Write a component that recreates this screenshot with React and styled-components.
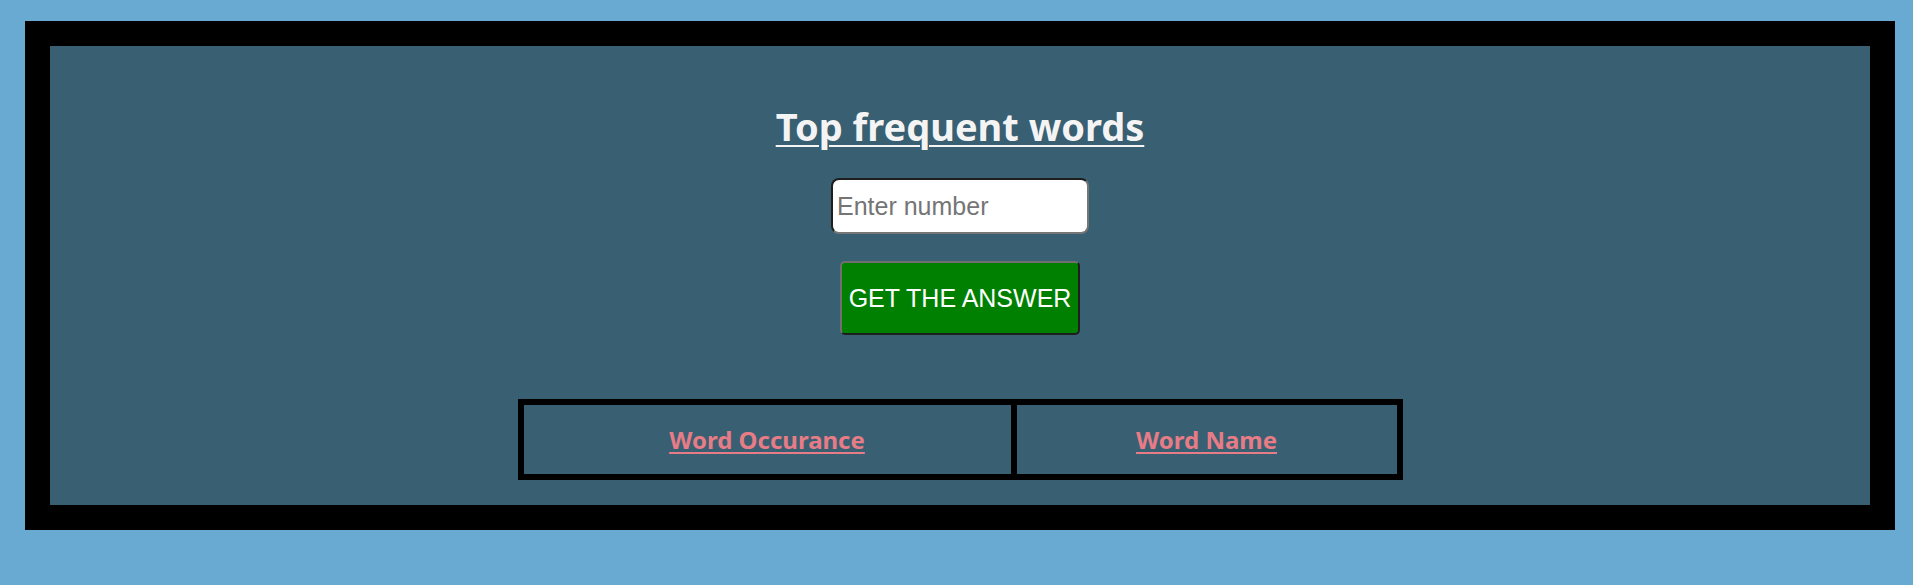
import React from "react";
import styled, { createGlobalStyle } from "styled-components";

const GlobalStyle = createGlobalStyle`
  html, body {
    margin: 0;
    padding: 0;
    background: #68aad1;
  }
  * { box-sizing: border-box; }
`;

const Page = styled.div`
  padding: 21px 18px 56px 25px;
`;

const Frame = styled.main`
  border: 25px solid #000;
  background: #395f72;
  padding: 57px 0 25px;
  display: flex;
  flex-direction: column;
  align-items: center;
`;

const Title = styled.h1`
  margin: 0;
  font-family: "Noto Sans", "Open Sans", sans-serif;
  font-weight: 700;
  font-size: 38px;
  line-height: 46px;
  color: #f4f4f4;
  text-decoration: underline;
  text-decoration-thickness: 2px;
  text-underline-offset: 4px;
`;

const NumberInput = styled.input`
  margin-top: 29px;
  width: 258px;
  height: 56px;
  padding: 1px 4px;
  font-family: "Liberation Sans", Arial, sans-serif;
  font-size: 25px;
  color: #222;
  background: #fff;
  border: 2px solid;
  border-color: #1e1e1e #767676 #767676 #1e1e1e;
  border-radius: 8px;
  outline: none;
  &::placeholder { color: #757575; }
`;

const AnswerButton = styled.button`
  margin-top: 27px;
  width: 240px;
  height: 74px;
  padding: 0;
  font-family: "Liberation Sans", Arial, sans-serif;
  font-size: 25px;
  color: #fff;
  background: #008000;
  border: 2px solid;
  border-color: #6f6f6f #1e1e1e #1e1e1e #6f6f6f;
  border-radius: 5px;
  cursor: pointer;
`;

const ResultTable = styled.div`
  margin-top: 64px;
  display: grid;
  grid-template-columns: 487px 380px;
  gap: 6px;
  background: #000;
  border: 6px solid #000;
`;

const HeadCell = styled.div`
  height: 69px;
  background: #395f72;
  display: flex;
  align-items: center;
  justify-content: center;
  padding-top: 0;
  font-family: "Noto Sans", "Open Sans", sans-serif;
  font-weight: 700;
  font-size: 24px;
  color: #e77c86;
  text-decoration: underline;
  text-decoration-thickness: 2px;
  text-underline-offset: 3px;
`;

export default function App() {
  return (
    <>
      <GlobalStyle />
      <Page>
        <Frame>
          <Title>Top frequent words</Title>
          <NumberInput type="number" placeholder="Enter number" />
          <AnswerButton>GET THE ANSWER</AnswerButton>
          <ResultTable>
            <HeadCell>Word Occurance</HeadCell>
            <HeadCell>Word Name</HeadCell>
          </ResultTable>
        </Frame>
      </Page>
    </>
  );
}
